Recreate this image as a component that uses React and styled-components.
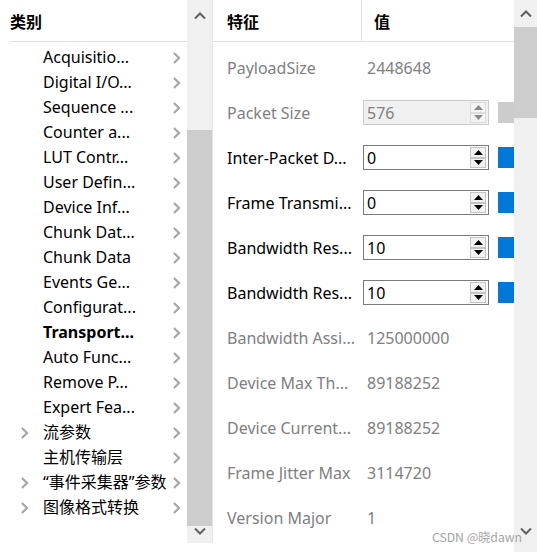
import styled, { createGlobalStyle } from "styled-components";

const Global = createGlobalStyle`
  html, body {
    margin: 0;
    padding: 0;
    background: #fff;
  }
  body {
    font-family: "Noto Sans", "Noto Sans CJK SC", sans-serif;
  }
`;

const Window = styled.div`
  position: relative;
  width: 537px;
  height: 552px;
  display: flex;
  overflow: hidden;
  background: #fff;
`;

const LeftPanel = styled.section`
  width: 212px;
  height: 543px;
  display: flex;
  border-right: 1px solid #e6e6e6;
`;

const Tree = styled.div`
  width: 187px;
  display: flex;
  flex-direction: column;
`;

const TreeHeader = styled.div`
  height: 41px;
  margin-left: 10px;
  display: flex;
  align-items: center;
  border-bottom: 1px solid #e0e0e0;
  font-family: "Noto Sans CJK SC", sans-serif;
  font-weight: 700;
  font-size: 16px;
  color: #000;
`;

const TreeList = styled.div`
  padding-top: 3px;
  display: flex;
  flex-direction: column;
`;

const TreeRow = styled.div`
  height: 25px;
  display: grid;
  grid-template-columns: 43px 129px 9px;
  align-items: center;
  font-size: 16px;
  color: #000;
  font-weight: ${(p) => (p.$bold ? 700 : 400)};
  white-space: nowrap;
`;

const Expander = styled.span`
  display: flex;
  padding-left: 20px;
`;

const Label = styled.span`
  overflow: hidden;
  line-height: 25px;
`;

const Scrollbar = styled.div`
  width: ${(p) => p.$w}px;
  height: 100%;
  background: #f0f0f0;
  display: flex;
  flex-direction: column;
  align-items: center;
`;

const ScrollButton = styled.div`
  height: ${(p) => p.$h}px;
  width: 100%;
  box-sizing: border-box;
  padding-top: ${(p) => p.$pt || 0}px;
  display: flex;
  align-items: ${(p) => (p.$pt ? "flex-start" : "center")};
  justify-content: center;
  flex-shrink: 0;
`;

const Track = styled.div`
  flex: 1;
  width: 100%;
  display: flex;
  flex-direction: column;
`;

const Thumb = styled.div`
  margin-top: ${(p) => p.$top}px;
  height: ${(p) => p.$h}px;
  width: 100%;
  background: #cdcdcd;
`;

const RightPanel = styled.section`
  flex: 1;
  display: flex;
  flex-direction: column;
`;

const GridHeader = styled.div`
  height: 41px;
  display: grid;
  grid-template-columns: 149px 1fr;
  border-bottom: 1px solid #e0e0e0;
  font-family: "Noto Sans CJK SC", sans-serif;
  font-weight: 700;
  font-size: 16px;
  color: #000;
`;

const HeadCell = styled.div`
  display: flex;
  align-items: center;
  padding-left: ${(p) => p.$pad}px;
  border-right: ${(p) => (p.$divider ? "1px solid #e0e0e0" : "none")};
`;

const PropList = styled.div`
  padding-top: 3px;
  display: flex;
  flex-direction: column;
`;

const PropRow = styled.div`
  height: 45px;
  display: grid;
  grid-template-columns: 150px 126px 9px 16px;
  align-items: center;
  font-size: 16px;
  white-space: nowrap;
  color: ${(p) => (p.$disabled ? "#808080" : "#000")};
`;

const PropName = styled.span`
  padding-left: 14px;
  overflow: hidden;
`;

const PropValue = styled.span`
  padding-left: 4px;
`;

const SpinBox = styled.div`
  grid-column: 2;
  height: 25px;
  box-sizing: border-box;
  border: 1px solid ${(p) => (p.$disabled ? "#cccccc" : "#7a7a7a")};
  background: ${(p) => (p.$disabled ? "#f0f0f0" : "#fff")};
  display: flex;
  align-items: center;
  justify-content: space-between;
  padding: 1px 2px 1px 3px;
  color: ${(p) => (p.$disabled ? "#808080" : "#000")};
`;

const SpinButtons = styled.div`
  width: 16px;
  height: 21px;
  display: flex;
  flex-direction: column;
`;

const SpinButton = styled.div`
  flex: 1;
  box-sizing: border-box;
  border: 1px solid ${(p) => (p.$disabled ? "#dcdcdc" : "#c4c4c4")};
  background: ${(p) => (p.$disabled ? "#f4f4f4" : "#f2f2f2")};
  display: flex;
  align-items: center;
  justify-content: center;
`;

const Slider = styled.div`
  grid-column: 4;
  width: 16px;
  height: 21px;
  background: ${(p) => (p.$disabled ? "#cccccc" : "#0078d7")};
`;

const Watermark = styled.div`
  position: absolute;
  right: 15px;
  bottom: 6px;
  font-family: "Noto Sans CJK SC", sans-serif;
  font-size: 12.2px;
  color: #a3a3a3;
  pointer-events: none;
`;

const Chevron = () => (
  <svg width="9" height="14" viewBox="0 0 9 14">
    <polyline points="2,2 7,7 2,12" fill="none" stroke="#a6a6a6" strokeWidth="2.2" />
  </svg>
);

const ScrollArrow = ({ down }) => (
  <svg width="12" height="8" viewBox="0 0 12 8">
    <polyline
      points={down ? "1,1.5 6,6.5 11,1.5" : "1,6.5 6,1.5 11,6.5"}
      fill="none"
      stroke="#606060"
      strokeWidth="2"
    />
  </svg>
);

const Tri = ({ down, color }) => (
  <svg width="9" height="5" viewBox="0 0 9 5">
    <polygon points={down ? "0,0 9,0 4.5,5" : "0,5 9,5 4.5,0"} fill={color} />
  </svg>
);

const categories = [
  { label: "Acquisitio..." },
  { label: "Digital I/O..." },
  { label: "Sequence ..." },
  { label: "Counter a..." },
  { label: "LUT Contr..." },
  { label: "User Defin..." },
  { label: "Device Inf..." },
  { label: "Chunk Dat..." },
  { label: "Chunk Data" },
  { label: "Events Ge..." },
  { label: "Configurat..." },
  { label: "Transport...", bold: true },
  { label: "Auto Func..." },
  { label: "Remove P..." },
  { label: "Expert Fea..." },
  { label: "流参数", expand: true },
  { label: "主机传输层" },
  { label: "“事件采集器”参数", expand: true },
  { label: "图像格式转换", expand: true },
];

const props = [
  { name: "PayloadSize", value: "2448648", disabled: true },
  { name: "Packet Size", value: "576", disabled: true, spin: true },
  { name: "Inter-Packet D...", value: "0", spin: true },
  { name: "Frame Transmi...", value: "0", spin: true },
  { name: "Bandwidth Res...", value: "10", spin: true },
  { name: "Bandwidth Res...", value: "10", spin: true },
  { name: "Bandwidth Assi...", value: "125000000", disabled: true },
  { name: "Device Max Th...", value: "89188252", disabled: true },
  { name: "Device Current...", value: "89188252", disabled: true },
  { name: "Frame Jitter Max", value: "3114720", disabled: true },
  { name: "Version Major", value: "1", disabled: true },
];

export default function App() {
  return (
    <>
      <Global />
      <Window>
        <LeftPanel>
          <Tree>
            <TreeHeader>类别</TreeHeader>
            <TreeList>
              {categories.map((c, i) => (
                <TreeRow key={i} $bold={c.bold}>
                  <Expander>{c.expand && <Chevron />}</Expander>
                  <Label>{c.label}</Label>
                  <Chevron />
                </TreeRow>
              ))}
            </TreeList>
          </Tree>
          <Scrollbar $w={25}>
            <ScrollButton $h={32}>
              <ScrollArrow />
            </ScrollButton>
            <Track>
              <Thumb $top={98} $h={396} />
            </Track>
            <ScrollButton $h={17} $pt={1}>
              <ScrollArrow down />
            </ScrollButton>
          </Scrollbar>
        </LeftPanel>
        <RightPanel>
          <GridHeader>
            <HeadCell $pad={14} $divider>特征</HeadCell>
            <HeadCell $pad={12}>值</HeadCell>
          </GridHeader>
          <PropList>
            {props.map((p, i) => (
              <PropRow key={i} $disabled={p.disabled}>
                <PropName>{p.name}</PropName>
                {p.spin ? (
                  <>
                    <SpinBox $disabled={p.disabled}>
                      <span>{p.value}</span>
                      <SpinButtons>
                        <SpinButton $disabled={p.disabled}>
                          <Tri color={p.disabled ? "#8a8a8a" : "#000"} />
                        </SpinButton>
                        <SpinButton $disabled={p.disabled}>
                          <Tri down color={p.disabled ? "#8a8a8a" : "#000"} />
                        </SpinButton>
                      </SpinButtons>
                    </SpinBox>
                    <Slider $disabled={p.disabled} />
                  </>
                ) : (
                  <PropValue>{p.value}</PropValue>
                )}
              </PropRow>
            ))}
          </PropList>
        </RightPanel>
        <Scrollbar $w={23}>
          <ScrollButton $h={27}>
            <ScrollArrow />
          </ScrollButton>
          <Track>
            <Thumb $top={0} $h={91} />
          </Track>
          <ScrollButton $h={26} $pt={0.5}>
            <ScrollArrow down />
          </ScrollButton>
        </Scrollbar>
        <Watermark>CSDN @晓dawn</Watermark>
      </Window>
    </>
  );
}
